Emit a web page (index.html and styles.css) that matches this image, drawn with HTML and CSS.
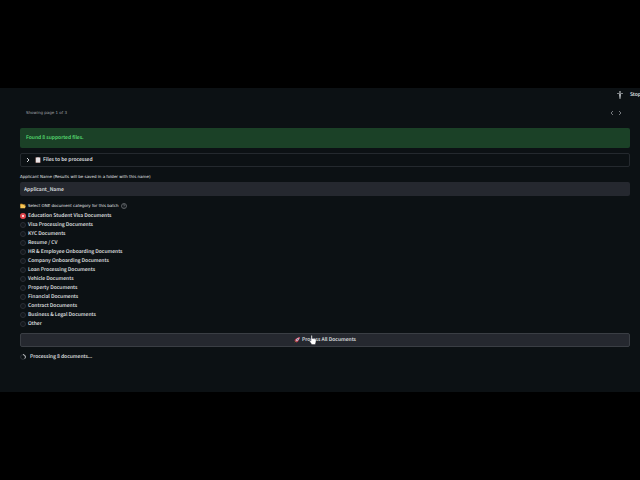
FILE: index.html
```html
<!DOCTYPE html>
<html lang="en">

<head>
    <meta charset="UTF-8">
    <meta name="viewport" content="width=device-width, initial-scale=1.0">
    <title>Document Processing</title>
    <link rel="stylesheet" href="styles.css">
</head>

<body>
    <main class="app">
        <header class="toolbar">
            <svg class="running-icon" viewBox="0 0 8 8" aria-hidden="true">
                <circle cx="4" cy="1" r="0.9" />
                <path d="M1 2.2h6v0.8H5v4.8h-0.7V5.5h-0.6v2.3H3V3H1z" />
            </svg>
            <button class="stop-button" type="button">Stop</button>
        </header>

        <div class="pager">
            <span class="pager-text">Showing page 1 of 3</span>
            <button class="pager-button" type="button" aria-label="Previous page">
                <svg viewBox="0 0 8 8"><path d="M5 2L3 4l2 2" /></svg>
            </button>
            <button class="pager-button" type="button" aria-label="Next page">
                <svg viewBox="0 0 8 8"><path d="M3 2l2 2-2 2" /></svg>
            </button>
        </div>

        <div class="alert">Found 8 supported files.</div>

        <button class="expander" type="button">
            <svg class="expander-arrow" viewBox="0 0 6 6"><path d="M2 1l2 2-2 2" /></svg>
            <svg class="clipboard-icon" viewBox="0 0 6 6">
                <rect x="0.5" y="0.3" width="5" height="5.5" rx="0.4" fill="#b98f86" />
                <rect x="1" y="0.8" width="4" height="4.6" fill="#e8e4e6" />
                <rect x="2" y="0" width="2" height="1" fill="#a9a6ad" />
            </svg>
            Files to be processed
        </button>

        <label class="field-label" for="applicant-name">Applicant Name (Results will be saved in a folder with this name)</label>
        <input class="text-input" type="text" id="applicant-name" value="Applicant_Name">

        <fieldset class="categories">
            <legend class="categories-label">
                <svg class="folder-icon" viewBox="0 0 6 6">
                    <path d="M0.3 0.8h2l0.6 0.7h2.4v1H0.3z" fill="#d99a2b" />
                    <path d="M0.3 5.3V1.8h4.2v1h1.3L5 5.3z" fill="#f7c655" />
                </svg>
                <span>Select ONE document category for this batch</span>
                <svg class="help-icon" viewBox="0 0 6 6">
                    <circle cx="3" cy="3" r="2.5" />
                    <path d="M2.2 2.4c0-1.1 1.6-1.1 1.6 0 0 0.5-0.8 0.5-0.8 1.1M3 4v0.5" />
                </svg>
            </legend>
            <label class="option"><input type="radio" name="category" checked>Education Student Visa Documents</label>
            <label class="option"><input type="radio" name="category">Visa Processing Documents</label>
            <label class="option"><input type="radio" name="category">KYC Documents</label>
            <label class="option"><input type="radio" name="category">Resume / CV</label>
            <label class="option"><input type="radio" name="category">HR &amp; Employee Onboarding Documents</label>
            <label class="option"><input type="radio" name="category">Company Onboarding Documents</label>
            <label class="option"><input type="radio" name="category">Loan Processing Documents</label>
            <label class="option"><input type="radio" name="category">Vehicle Documents</label>
            <label class="option"><input type="radio" name="category">Property Documents</label>
            <label class="option"><input type="radio" name="category">Financial Documents</label>
            <label class="option"><input type="radio" name="category">Contract Documents</label>
            <label class="option"><input type="radio" name="category">Business &amp; Legal Documents</label>
            <label class="option"><input type="radio" name="category">Other</label>
        </fieldset>

        <button class="process-button" type="button">
            <svg class="rocket-icon" viewBox="0 0 6 6">
                <path d="M0.2 3.4L2 1.5l1.2 0.3L1.8 3.8zM2.5 5.8L4.5 4l-0.4-1.2-1.9 1.4z" fill="#d6284b" />
                <path d="M5.8 0.2C4 0.2 2.4 1.4 1.5 3.4l1.1 1.1C4.6 3.6 5.8 2 5.8 0.2z" fill="#d3a9b8" />
                <path d="M5.8 0.2L4 0.5l1.5 1.5z" fill="#d6284b" />
                <circle cx="3.6" cy="2.4" r="0.5" fill="#4a6c93" />
                <path d="M1.5 3.9L0.4 5.6l1.7-1.1z" fill="#ee9a3a" />
            </svg>
            <span>Process All Documents</span>
            <svg class="pointer" viewBox="0 0 8 10" aria-hidden="true">
                <path d="M2 0.8c0-0.8 1.2-0.8 1.2 0V3.4l3 0.5c0.8 0.1 1.1 0.5 1 1.2L6.8 7.6 6.2 9.5H2.8L0.5 6.2c-0.4-0.7 0.3-1.1 0.8-0.7L2 6.1z" />
            </svg>
        </button>

        <div class="status" role="status">
            <svg class="spinner" viewBox="0 0 6 6">
                <circle cx="3" cy="3" r="2.4" stroke="#30343b" />
                <path d="M3 0.6a2.4 2.4 0 0 1 1.8 4" stroke="#d8dadd" />
            </svg>
            Processing 8 documents...
        </div>
    </main>
</body>

</html>
```

FILE: styles.css
```css
* {
    box-sizing: border-box;
}

body {
    margin: 0;
    min-height: 100vh;
    display: flex;
    flex-direction: column;
    justify-content: center;
    overflow-x: hidden;
    background-color: black;
    color: #e6e8eb;
    font-family: "Noto Sans CJK SC", "Noto Sans", sans-serif;
    font-size: 5px;
    font-weight: 500;
    line-height: 8px;
    text-rendering: geometricPrecision;
}

button,
input {
    margin: 0;
    font: inherit;
    color: inherit;
    text-rendering: inherit;
}

button {
    border: none;
    padding: 0;
    background: none;
    cursor: pointer;
}

svg {
    display: block;
    flex: none;
}

.app {
    background-color: #0c1114;
    padding: 3px 10px 31px 20px;
}

.toolbar {
    display: flex;
    justify-content: flex-end;
    align-items: center;
    gap: 6px;
    height: 8px;
    margin-right: -11px;
}

.running-icon {
    width: 8px;
    height: 8px;
    fill: #a3a7ab;
}

.pager {
    display: flex;
    align-items: center;
    height: 8px;
    margin: 10px 6px 11px;
    color: #a0a4a9;
}

.pager-text,
.field-label,
.categories-label {
    font-family: "DejaVu Sans", sans-serif;
    font-size: 4px;
}

.pager-text {
    flex: 1;
}

.pager-button svg {
    width: 8px;
    height: 8px;
    fill: none;
    stroke: #8f9397;
    stroke-width: 0.8;
}

.alert {
    padding: 6px;
    border-radius: 2px;
    background-color: #1b4127;
    color: #5be078;
}

.expander {
    display: flex;
    align-items: center;
    width: 100%;
    height: 14px;
    margin-top: 5px;
    padding: 0 4px;
    border: 1px solid #24292e;
    border-radius: 2px;
}

.expander-arrow {
    width: 6px;
    height: 6px;
    margin-right: 4px;
    fill: none;
    stroke: #d8dadd;
}

.clipboard-icon {
    width: 6px;
    height: 6px;
    margin-right: 2px;
}

.field-label {
    display: block;
    margin-top: 6px;
}

.text-input {
    display: block;
    width: 100%;
    height: 14px;
    margin-top: 1px;
    padding: 0 4px;
    border: none;
    border-radius: 2px;
    background-color: #25282f;
}

.categories {
    margin: 6px 0 0;
    padding: 0;
    border: none;
}

.categories-label {
    display: flex;
    align-items: center;
    gap: 2px;
    padding: 0;
    margin-bottom: 1px;
}

.folder-icon,
.help-icon {
    width: 6px;
    height: 6px;
}

.help-icon {
    fill: none;
    stroke: #8f9397;
    stroke-width: 0.6;
}

.option {
    display: flex;
    align-items: center;
    gap: 2px;
    width: max-content;
    height: 9px;
}

.option input {
    appearance: none;
    width: 6px;
    height: 6px;
    border: 1px solid #2a2e35;
    border-radius: 50%;
    background-color: #14181d;
}

.option input:checked {
    border: 2px solid #e2474e;
    background-color: white;
}

.process-button {
    position: relative;
    display: flex;
    justify-content: center;
    align-items: center;
    gap: 2px;
    width: 100%;
    height: 14px;
    margin-top: 5px;
    border: 1px solid #3a3e44;
    border-radius: 2px;
    background-color: #25282f;
}

.rocket-icon {
    width: 6px;
    height: 6px;
}

.pointer {
    position: absolute;
    top: 1px;
    left: calc(50% - 16px);
    width: 8px;
    height: 10px;
    fill: white;
    stroke: #25282f;
    stroke-width: 0.4;
}

.status {
    display: flex;
    align-items: center;
    gap: 4px;
    margin-top: 6px;
}

.spinner {
    width: 6px;
    height: 6px;
    fill: none;
    stroke-width: 0.9;
}
```
